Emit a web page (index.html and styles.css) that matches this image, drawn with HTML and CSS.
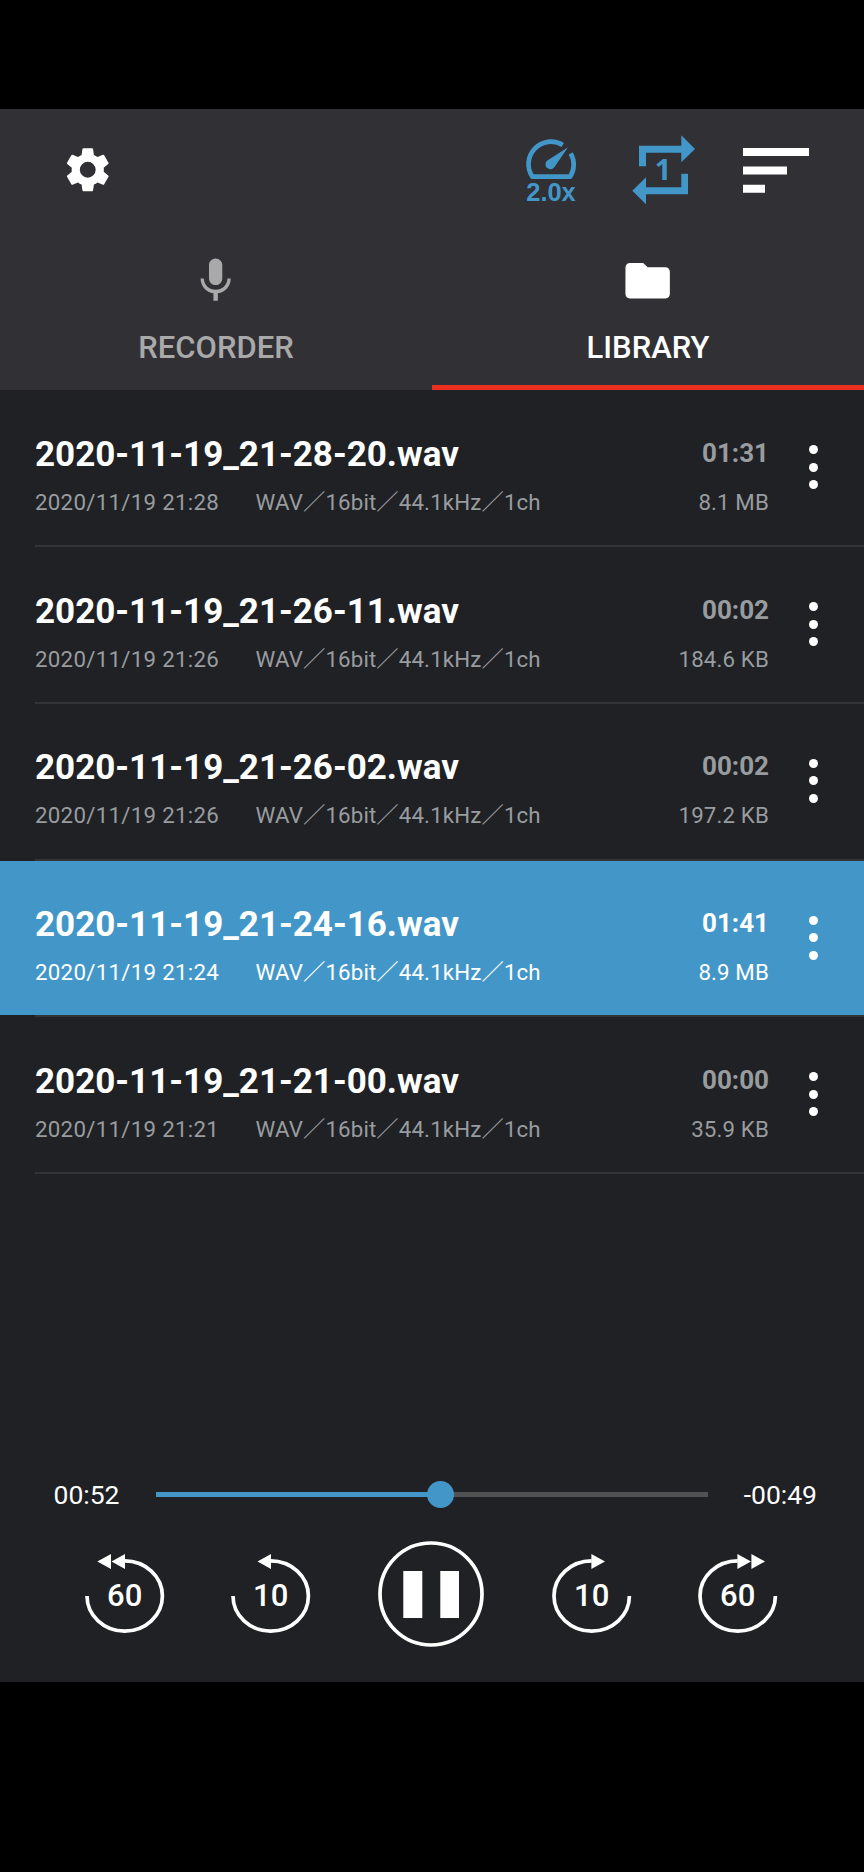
FILE: index.html
```
<!DOCTYPE html>
<html lang="en">
<head>
    <meta charset="UTF-8">
    <meta name="viewport" content="width=device-width, initial-scale=1.0">
    <title>Recorder</title>
    <link rel="stylesheet" href="styles.css">
</head>
<body>
    <div class="app">
        <header>
            <div class="toolbar">
                <svg class="settings" viewBox="0 0 24 24"><path d="M19.43 12.98c.04-.32.07-.64.07-.98s-.03-.66-.07-.98l2.11-1.65c.19-.15.24-.42.12-.64l-2-3.46c-.12-.22-.39-.3-.61-.22l-2.49 1c-.52-.4-1.08-.73-1.69-.98l-.38-2.65C14.46 2.18 14.25 2 14 2h-4c-.25 0-.46.18-.49.42l-.38 2.65c-.61.25-1.17.59-1.69.98l-2.49-1c-.23-.09-.49 0-.61.22l-2 3.46c-.13.22-.07.49.12.64l2.11 1.65c-.04.32-.07.65-.07.98s.03.66.07.98l-2.11 1.65c-.19.15-.24.42-.12.64l2 3.46c.12.22.39.3.61.22l2.49-1c.52.4 1.08.73 1.69.98l.38 2.65c.03.24.24.42.49.42h4c.25 0 .46-.18.49-.42l.38-2.65c.61-.25 1.17-.59 1.69-.98l2.49 1c.23.09.49 0 .61-.22l2-3.46c.12-.22.07-.49-.12-.64l-2.11-1.65zM12 15.7a3.7 3.7 0 1 1 0-7.4 3.7 3.7 0 0 1 0 7.4z"/></svg>
                <svg class="speed" viewBox="0 0 50 64">
                    <path class="dial" d="M36.7 7A22.5 22.5 0 0 0 6.3 38.7H44.1A22.5 22.5 0 0 0 44.7 15.3"/>
                    <path d="M42 9.3L28.5 29A4.9 4.9 0 1 1 21 22.8z"/>
                    <text x="0.3" y="63" textLength="49.5">2.0x</text>
                </svg>
                <svg class="repeat" viewBox="0 0 63 70">
                    <path d="M7 31.3V10.7H49.3V0.3L63 14L49.3 27.3V17.7H14V31.3z"/>
                    <path d="M56 38.7V59.3H14V69.3L0.3 55.7L14 42.3V52.3H49.3V38.7z"/>
                    <text x="22.7" y="45.3">1</text>
                </svg>
                <svg class="sort" viewBox="0 0 66 45"><path d="M0 0H66V8H0zM0 18.4H44V26.4H0zM0 36.8H22V44.8H0z"/></svg>
            </div>
            <nav class="tabs">
                <div class="tab">
                    <svg viewBox="0 0 24 24"><path d="M12 14c1.66 0 2.99-1.34 2.99-3L15 5c0-1.66-1.34-3-3-3S9 3.34 9 5v6c0 1.66 1.34 3 3 3zm5.3-3c0 3-2.54 5.1-5.3 5.1S6.7 14 6.7 11H5.2c0 3.41 2.52 6.23 5.8 6.72V21h2v-3.28c3.28-.48 5.8-3.3 5.8-6.72h-1.5z"/></svg>
                    <span>RECORDER</span>
                </div>
                <div class="tab active">
                    <svg viewBox="0 0 24 24"><path d="M10 4H4c-1.1 0-1.99.9-1.99 2L2 18c0 1.1.9 2 2 2h16c1.1 0 2-.9 2-2V8c0-1.1-.9-2-2-2h-8l-2-2z"/></svg>
                    <span>LIBRARY</span>
                </div>
            </nav>
        </header>

        <ul class="files" id="files"></ul>

        <div class="player">
            <div class="progress">
                <span class="elapsed">00:52</span>
                <div class="track">
                    <div class="fill"></div>
                    <div class="thumb"></div>
                </div>
                <span class="remaining">-00:49</span>
            </div>
            <div class="controls">
                <svg class="skip" viewBox="0 0 80 80">
                    <path class="ring" d="M2 42A37.7 35.1 0 1 0 39.7 6.9"/>
                    <path d="M40 0V15L26.5 7.5zM26 0V15L12.3 7.5z"/>
                    <text x="39.7" y="52">60</text>
                </svg>
                <svg class="skip" viewBox="0 0 80 80">
                    <path class="ring" d="M2 42A37.7 35.1 0 1 0 39.7 6.9"/>
                    <path d="M40 0V15L26.5 7.5z"/>
                    <text x="39.7" y="52">10</text>
                </svg>
                <svg class="pause" viewBox="0 0 106 106">
                    <circle class="ring" cx="53" cy="53" r="51"/>
                    <path d="M25.3 30H44.3V77H25.3zM62.3 30H81V77H62.3z"/>
                </svg>
                <svg class="skip" viewBox="0 0 80 80">
                    <path class="ring" d="M77.4 42A37.7 35.1 0 1 1 39.7 6.9"/>
                    <path d="M39.4 0V15L53 7.5z"/>
                    <text x="39.7" y="52">10</text>
                </svg>
                <svg class="skip" viewBox="0 0 80 80">
                    <path class="ring" d="M77.4 42A37.7 35.1 0 1 1 39.7 6.9"/>
                    <path d="M39.4 0V15L53 7.5zM53.4 0V15L67 7.5z"/>
                    <text x="39.7" y="52">60</text>
                </svg>
            </div>
        </div>
    </div>

    <script>
        const files = [
            { name: '2020-11-19_21-28-20.wav', date: '2020/11/19 21:28', time: '01:31', size: '8.1 MB' },
            { name: '2020-11-19_21-26-11.wav', date: '2020/11/19 21:26', time: '00:02', size: '184.6 KB' },
            { name: '2020-11-19_21-26-02.wav', date: '2020/11/19 21:26', time: '00:02', size: '197.2 KB' },
            { name: '2020-11-19_21-24-16.wav', date: '2020/11/19 21:24', time: '01:41', size: '8.9 MB', playing: true },
            { name: '2020-11-19_21-21-00.wav', date: '2020/11/19 21:21', time: '00:00', size: '35.9 KB' }
        ];

        document.getElementById('files').innerHTML = files.map(file => `
            <li>
                <div class="file ${file.playing ? 'playing' : ''}">
                    <div class="info">
                        <div class="name">${file.name}</div>
                        <div class="meta"><span class="date">${file.date}</span><span>WAV／16bit／44.1kHz／1ch</span></div>
                    </div>
                    <div class="side">
                        <div class="time">${file.time}</div>
                        <div class="size">${file.size}</div>
                    </div>
                    <div class="more"><i></i><i></i><i></i></div>
                </div>
                <div class="divider"></div>
            </li>`).join('');
    </script>
</body>
</html>
```
FILE: styles.css
```
* {
    box-sizing: border-box;
}
body {
    margin: 0;
    padding: 109px 0 190px;
    background: #000;
    color: #fff;
    font-family: Roboto, "Noto Sans CJK JP", sans-serif;
}
svg {
    display: block;
    fill: currentColor;
    overflow: visible;
}
.app {
    height: 1573px;
    background: #202125;
    display: flex;
    flex-direction: column;
}
header {
    height: 281.3px;
    background: #313035;
}
.toolbar {
    height: 122px;
    padding: 0 55px 0 62px;
    display: flex;
    align-items: center;
}
.settings {
    width: 51.5px;
    height: 51.5px;
}
.speed {
    width: 50px;
    height: 64px;
    margin-left: auto;
    color: #4397c8;
}
.speed text {
    font: bold 25.5px "Liberation Sans", Arial, sans-serif;
}
.dial {
    fill: none;
    stroke: currentColor;
    stroke-width: 4.7;
    stroke-linejoin: round;
}
.repeat {
    width: 63px;
    height: 70px;
    margin-left: 56px;
    color: #4397c8;
}
.repeat text {
    font: bold 29px "Open Sans", sans-serif;
}
.sort {
    width: 66px;
    height: 45px;
    margin-left: 48px;
}
.tabs {
    display: flex;
    height: 159.3px;
}
.tab {
    flex: 1;
    display: flex;
    flex-direction: column;
    align-items: center;
    padding-top: 23px;
    color: #a9a9a9;
    font-size: 31px;
    font-weight: 500;
    line-height: 36px;
    border-bottom: 5px solid transparent;
}
.tab svg {
    width: 53.3px;
    height: 53.3px;
    margin-bottom: 23px;
}
.tab.active {
    color: #fff;
    border-bottom-color: #ec301f;
}
.files {
    list-style: none;
    margin: 0;
    padding: 0;
}
.file {
    display: flex;
    height: 154.75px;
    padding: 43.5px 46px 0 35px;
}
.divider {
    height: 2px;
    margin-left: 35px;
    background: #333436;
}
.info {
    flex: 1;
}
.name {
    font-size: 35px;
    font-weight: bold;
    line-height: 42px;
    margin-bottom: 12px;
}
.meta, .size {
    display: flex;
    height: 28px;
    font-size: 22.3px;
    line-height: 28px;
    letter-spacing: 0.13px;
    color: #989c9f;
}
.date {
    width: 220.5px;
    letter-spacing: 0.27px;
}
.side {
    display: flex;
    flex-direction: column;
    align-items: flex-end;
}
.time {
    font-size: 26px;
    font-weight: bold;
    line-height: 39.5px;
    margin-bottom: 14.5px;
    color: #989c9f;
}
.more {
    display: flex;
    flex-direction: column;
    gap: 8.6px;
    margin: 11.5px 0 0 40px;
}
.more i {
    width: 9px;
    height: 9px;
    border-radius: 50%;
    background: #fff;
}
.playing {
    background: #4397c8;
}
.playing .meta, .playing .time, .playing .size {
    color: #fff;
}
.player {
    margin-top: auto;
    height: 204px;
}
.progress {
    display: flex;
    align-items: center;
    height: 33px;
    padding: 0 47px 0 53.5px;
    font-size: 26.5px;
}
.elapsed {
    width: 102.5px;
}
.remaining {
    flex: 1;
    text-align: right;
}
.track {
    position: relative;
    width: 552px;
    height: 5px;
    background: #515254;
}
.fill {
    width: 285px;
    height: 5px;
    background: #4397c8;
}
.thumb {
    position: absolute;
    left: 271.3px;
    top: -11px;
    width: 27px;
    height: 27px;
    border-radius: 50%;
    background: #4397c8;
}
.controls {
    display: flex;
    gap: 66.5px;
    align-items: center;
    height: 106px;
    margin-top: 30px;
    padding-left: 84.6px;
}
.skip {
    width: 80px;
    height: 80px;
}
.skip text {
    font-size: 31px;
    font-weight: 500;
    text-anchor: middle;
}
.pause {
    width: 106px;
    height: 106px;
    margin: 0 0.9px;
}
.ring {
    fill: none;
    stroke: currentColor;
    stroke-width: 3.7;
}
```
